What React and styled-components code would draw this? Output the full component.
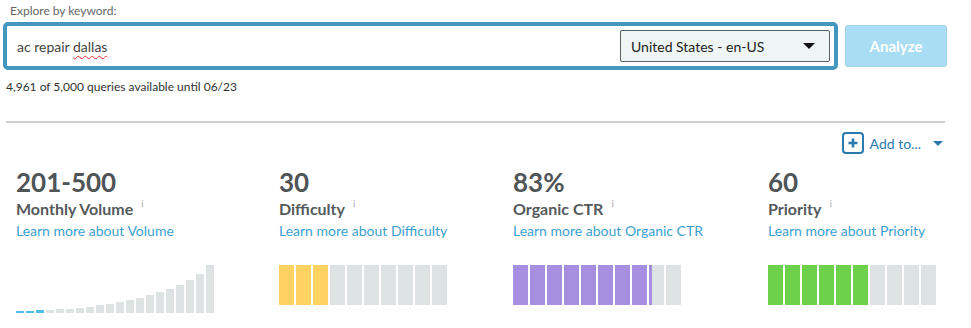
import styled, { createGlobalStyle } from "styled-components";

const GlobalStyle = createGlobalStyle`
  body {
    margin: 0;
    background: #fff;
    font-family: Lato, "Open Sans", sans-serif;
  }
`;

const Page = styled.div`
  width: 971px;
  padding: 0 0 0 3px;
  box-sizing: border-box;
`;

const Label = styled.div`
  font-size: 12px;
  line-height: 16px;
  color: #666;
  padding: 3px 0 0 7px;
  height: 19px;
`;

const SearchRow = styled.div`
  display: flex;
  align-items: center;
  gap: 7px;
`;

const SearchBox = styled.div`
  width: 835px;
  height: 48px;
  box-sizing: border-box;
  border: 4px solid #4396be;
  border-radius: 5px;
  display: flex;
  align-items: center;
  justify-content: space-between;
  padding: 0 4px 0 10px;
`;

const Query = styled.span`
  font-size: 14px;
  color: #444;
  span {
    text-decoration: underline wavy #e33;
    text-decoration-thickness: 1px;
    text-underline-offset: 3px;
  }
`;

const Select = styled.div`
  width: 210px;
  height: 32px;
  box-sizing: border-box;
  border: 1px solid #5a6163;
  border-radius: 2px;
  background: #eef5f4;
  display: flex;
  align-items: center;
  justify-content: space-between;
  padding: 0 14px 0 10px;
  font-size: 14px;
  color: #222;
`;

const Caret = styled.span`
  width: 0;
  height: 0;
  border-left: ${p => p.size}px solid transparent;
  border-right: ${p => p.size}px solid transparent;
  border-top: ${p => p.size}px solid ${p => p.color};
`;

const AnalyzeButton = styled.button`
  width: 102px;
  height: 42px;
  border: 1px solid #9fd2ea;
  border-radius: 3px;
  background: #a9ddf3;
  color: #fff;
  font-family: Lato, sans-serif;
  font-weight: 700;
  font-size: 15px;
`;

const Quota = styled.div`
  font-size: 12px;
  color: #333;
  line-height: 16px;
  padding: 9px 0 0 3px;
`;

const Divider = styled.hr`
  margin: 26px 0 0 3px;
  width: 939px;
  border: 0;
  border-top: 2px solid #cfcfcf;
`;

const AddRow = styled.div`
  display: flex;
  justify-content: flex-end;
  align-items: center;
  gap: 6px;
  padding: 9px 28px 0 0;
  height: 22px;
  color: #2a7ab0;
  font-size: 14px;
`;

const PlusBox = styled.span`
  width: 22px;
  height: 22px;
  box-sizing: border-box;
  border: 2px solid #2a7ab0;
  border-radius: 4px;
  display: flex;
  align-items: center;
  justify-content: center;
`;

const AddText = styled.span`
  margin-right: 6px;
`;

const Metrics = styled.div`
  display: grid;
  grid-template-columns: 263px 234px 255px 1fr;
  padding: 13px 0 0 13px;
`;

const Metric = styled.div`
  display: flex;
  flex-direction: column;
`;

const Value = styled.div`
  font-size: 26px;
  font-weight: 700;
  line-height: 30px;
  color: #4f5456;
`;

const MetricName = styled.div`
  margin-top: 2px;
  font-size: 16px;
  font-weight: 700;
  line-height: 20px;
  color: #555a5c;
  sup {
    font-size: 10px;
    font-weight: 400;
    line-height: 0;
    color: #aaa;
    margin-left: 8px;
    vertical-align: 8px;
  }
`;

const LearnLink = styled.a`
  margin-top: 2px;
  font-size: 14px;
  line-height: 20px;
  color: #3d9fd0;
  text-decoration: none;
`;

const BarChart = styled.div`
  margin-top: 24px;
  height: 48px;
  display: flex;
  align-items: flex-end;
  gap: 2px;
`;

const VolumeBar = styled.div`
  width: 8px;
  background: ${p => (p.active ? "#4fbee8" : "#dce3e2")};
`;

const Segments = styled.div`
  margin-top: 24px;
  display: flex;
  gap: 2px;
`;

const Segment = styled.div`
  width: 15px;
  height: 40px;
`;

const volumeHeights = [2, 2, 3, 3, 4, 4, 5, 6, 8, 9, 11, 13, 15, 18, 21, 24, 28, 33, 39, 48];

function SegmentBar({ value, color }) {
  return (
    <Segments>
      {Array.from({ length: 10 }).map((_, i) => {
        const fill = Math.max(0, Math.min(1, value - i)) * 100;
        return (
          <Segment
            key={i}
            style={{ background: `linear-gradient(to right, ${color} ${fill}%, #dce3e2 ${fill}%)` }}
          />
        );
      })}
    </Segments>
  );
}

const metrics = [
  { value: "201-500", name: "Monthly Volume", link: "Volume" },
  { value: "30", name: "Difficulty", link: "Difficulty", fill: 3, color: "#ffd262" },
  { value: "83%", name: "Organic CTR", link: "Organic CTR", fill: 8.2, color: "#a78fe0" },
  { value: "60", name: "Priority", link: "Priority", fill: 6, color: "#6dd14c" },
];

export default function App() {
  return (
    <Page>
      <GlobalStyle />
      <Label>Explore by keyword:</Label>
      <SearchRow>
        <SearchBox>
          <Query>ac repair <span>dallas</span></Query>
          <Select>
            United States - en-US
            <Caret size={6} color="#111" />
          </Select>
        </SearchBox>
        <AnalyzeButton>Analyze</AnalyzeButton>
      </SearchRow>
      <Quota>4,961 of 5,000 queries available until 06/23</Quota>
      <Divider />
      <AddRow>
        <PlusBox>
          <svg width="10" height="10" viewBox="0 0 10 10">
            <path d="M5 0.5v9M0.5 5h9" stroke="#2a7ab0" strokeWidth="2.6" />
          </svg>
        </PlusBox>
        <AddText>Add to...</AddText>
        <Caret size={5} color="#2a7ab0" />
      </AddRow>
      <Metrics>
        {metrics.map(m => (
          <Metric key={m.name}>
            <Value>{m.value}</Value>
            <MetricName>{m.name}<sup>i</sup></MetricName>
            <LearnLink href="#">Learn more about {m.link}</LearnLink>
            {m.fill === undefined ? (
              <BarChart>
                {volumeHeights.map((h, i) => (
                  <VolumeBar key={i} active={i < 3} style={{ height: h }} />
                ))}
              </BarChart>
            ) : (
              <SegmentBar value={m.fill} color={m.color} />
            )}
          </Metric>
        ))}
      </Metrics>
    </Page>
  );
}
